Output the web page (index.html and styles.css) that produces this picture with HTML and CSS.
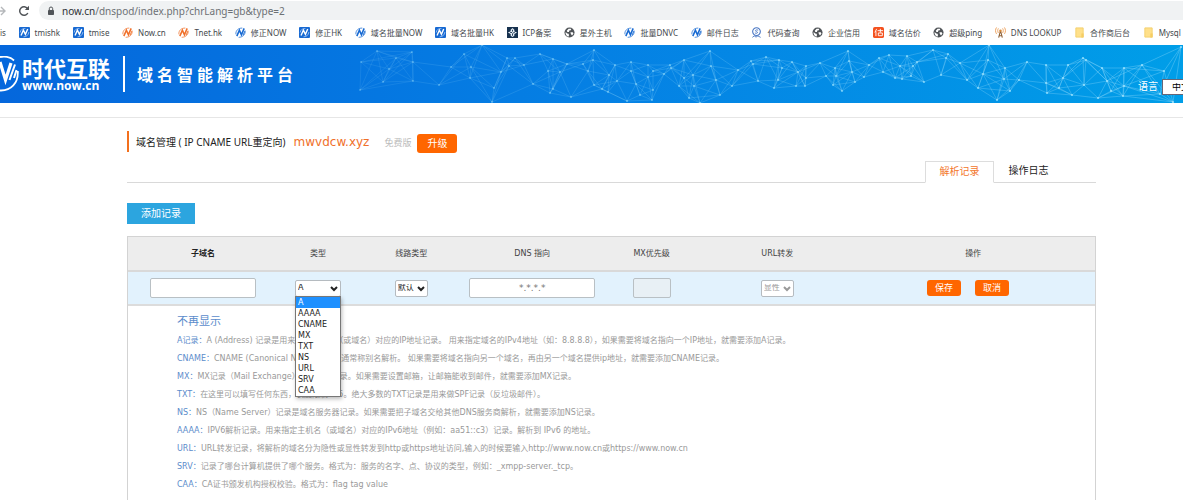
FILE: index.html
```html
<!DOCTYPE html>
<html lang="zh-CN">
<head>
<meta charset="utf-8">
<title>域名智能解析平台</title>
<link rel="stylesheet" href="styles.css">
</head>
<body>
<svg class="defs" aria-hidden="true">
  <symbol id="n-mark" viewBox="0 0 12 12"><path d="M1 8C.500 4 3.500 1 8 1.200M4 11.300c4 0 7-2.500 7.300-6.500" fill="none" stroke="currentColor" stroke-width=".8"/><path d="M2 10 4.800 3.500 7 8.500 10 1.500" fill="none" stroke="currentColor" stroke-width="1.700"/><path d="M8.800 8.800 11 4" fill="none" stroke="currentColor"/></symbol>
  <symbol id="n-box" viewBox="0 0 12 12"><rect width="12" height="12" rx="1" fill="#1769d2"/><path d="M2.200 9.200 4.800 3.500 7 8 9.500 2.200" fill="none" stroke="#fff" stroke-width="1.500"/><path d="M1.300 6C1.500 3 4 1.500 7 1.700M5 10.700c3 0 5.300-1.700 5.800-5.200" fill="none" stroke="#cfe3ff" stroke-width=".7"/></symbol>
  <symbol id="globe" viewBox="0 0 12 12"><circle cx="6" cy="6" r="5.500" fill="#4f5357"/><path d="M1.800 5.500 3.500 7l1.500.3.500 1.700-.8 1.500C2.500 9.800 1.300 7.800 1.800 5.500zM5 1.800l3 .1-.6 1.600-1.600.4-.4 1.500-1.700.1L3 4zM7 5.600l2.500.2.800 1.300-1.500 2.300-1.300-1.900z" fill="#fff"/></symbol>
  <symbol id="folder" viewBox="0 0 12 12"><path d="M2 1h8v10H2z" fill="#ffe08a" stroke="#f3d06c"/><path d="M8 7h2.500v4.500H8z" fill="#f6cd64"/></symbol>
</svg>
<header class="browser">
  <div class="toolbar">
    <svg class="nav-icon forward" viewBox="0 0 12 12"><path d="M0 6h10M6 2l4 4-4 4" fill="none" stroke="#b5b8bb" stroke-width="1.400"/></svg>
    <svg class="nav-icon" viewBox="0 0 12 12"><path d="M9.800 8A4.300 4.300 0 1 1 9.500 3.500" fill="none" stroke="#505458" stroke-width="1.500"/><path d="M11 .8V5H6.800z" fill="#505458"/></svg>
    <div class="address">
      <svg class="lock" viewBox="0 0 8 10"><rect x="1" y="4" width="6" height="5" rx=".8" fill="#505458"/><path d="M2.300 4V2.700a1.700 1.700 0 0 1 3.400 0V4" fill="none" stroke="#505458"/></svg>
      <span><b>now.cn</b>/dnspod/index.php?chrLang=gb&amp;type=2</span>
    </div>
  </div>
  <nav class="bookmarks" aria-label="书签">
    <a href="#">is</a>
    <a href="#"><svg><use href="#n-box"/></svg>tmishk</a>
    <a href="#"><svg><use href="#n-box"/></svg>tmise</a>
    <a href="#"><svg class="orange"><use href="#n-mark"/></svg>Now.cn</a>
    <a href="#"><svg class="orange"><use href="#n-mark"/></svg>Tnet.hk</a>
    <a href="#"><svg><use href="#n-mark"/></svg>修正NOW</a>
    <a href="#"><svg><use href="#n-box"/></svg>修正HK</a>
    <a href="#"><svg><use href="#n-mark"/></svg>域名批量NOW</a>
    <a href="#"><svg><use href="#n-box"/></svg>域名批量HK</a>
    <a href="#"><svg viewBox="0 0 12 12"><path d="M0 0h12v12H0z" fill="#17324f"/><path d="M6 1 8 3v2l3 1-3 1.500V9.500L6 11 4 9.500V7.500L1 6l3-1.500V3z" fill="#e6eef5"/><path d="M6 3v2M3.500 6h2M6.500 6.500l2-.5M6 7v2.500" stroke="#17324f"/></svg>ICP备案</a>
    <a href="#"><svg><use href="#globe"/></svg>星外主机</a>
    <a href="#"><svg><use href="#n-mark"/></svg>批量DNVC</a>
    <a href="#"><svg><use href="#n-mark"/></svg>邮件日志</a>
    <a href="#"><svg viewBox="0 0 12 12"><circle cx="6" cy="5" r="4.200" fill="none" stroke="#4b78c4" stroke-width="1.200"/><path d="M7.800 3.500C5 2.300 3.800 4.500 6 5s1 2.700-1.800 1.500M1.500 11.300l2-1.600 2 1.300 2-1.300 3 1.600" fill="none" stroke="#4b78c4"/></svg>代码查询</a>
    <a href="#"><svg><use href="#globe"/></svg>企业信用</a>
    <a href="#"><svg viewBox="0 0 12 12"><rect width="12" height="12" rx="2" fill="#f4511e"/><path d="M4 2 2 6M3.200 4.500V10M5 4h6M8 2v4M5.800 6.500h4.400v3H5.800z" fill="none" stroke="#fff"/></svg>域名估价</a>
    <a href="#"><svg><use href="#globe"/></svg>超级ping</a>
    <a href="#"><svg viewBox="0 0 12 12"><path d="M6 4 4 11.500M6 4l2 7.500M4.500 9.500h3" stroke="#8f6238" stroke-width="1.200" fill="none"/><circle cx="6" cy="4" r="1.300" fill="#d98836"/><path d="M3.700 1.500c-1 1.500-1 3.500 0 5M8.300 1.500c1 1.500 1 3.500 0 5M1.700.5c-1.500 2-1.500 5 0 7M10.300.5c1.500 2 1.500 5 0 7" stroke="#eda05a" fill="none"/></svg>DNS LOOKUP</a>
    <a href="#"><svg><use href="#folder"/></svg>合作商后台</a>
    <a href="#"><svg><use href="#folder"/></svg>Mysql</a>
  </nav>
</header>

<div class="banner">
  <svg class="network" id="network" viewBox="0 0 1183 58" preserveAspectRatio="xMaxYMid slice" aria-hidden="true"></svg>
  <svg class="logo" viewBox="0 0 20 36" aria-hidden="true"><path d="M0 1C6 0 11 1.500 14 4.500M0 34.500C11 35 18.500 27 17.800 15" fill="none" stroke="#fff" stroke-width="1.800"/><path d="M0 6 5.500 24 11 7" fill="none" stroke="#fff" stroke-width="3.200"/><path d="M9.500 24 15 8.500M14 22l2.500-8" fill="none" stroke="#fff" stroke-width="2"/></svg>
  <div class="brand"><strong>时代互联</strong><span>www.now.cn</span></div>
  <h1>域名智能解析平台</h1>
  <div class="language"><label for="lang">语言</label><select id="lang"><option>中文</option></select></div>
</div>

<main>
  <div class="heading">
    <h2>域名管理 ( IP CNAME URL重定向)</h2>
    <span class="domain">mwvdcw.xyz</span>
    <span class="plan">免费版</span>
    <button class="upgrade" type="button">升级</button>
  </div>
  <nav class="tabs"><a class="active" href="#">解析记录</a><a href="#">操作日志</a></nav>
  <button class="add" type="button">添加记录</button>

  <div class="panel">
    <table>
      <thead><tr><th class="c-host">子域名</th><th class="c-type">类型</th><th class="c-line">线路类型</th><th class="c-dns">DNS 指向</th><th class="c-mx">MX优先级</th><th class="c-url">URL转发</th><th>操作</th></tr></thead>
      <tbody><tr>
        <td><input class="host" type="text" aria-label="子域名"></td>
        <td><div class="pick type"><select aria-label="类型"><option>A</option></select><svg viewBox="0 0 8 6"><path d="M1 1l3 3 3-3"/></svg>
          <ul class="menu"><li class="selected">A</li><li>AAAA</li><li>CNAME</li><li>MX</li><li>TXT</li><li>NS</li><li>URL</li><li>SRV</li><li>CAA</li></ul></div></td>
        <td><div class="pick"><select aria-label="线路类型"><option>默认</option></select><svg viewBox="0 0 8 6"><path d="M1 1l3 3 3-3"/></svg></div></td>
        <td><input class="dns" type="text" placeholder="*.*.*.*" aria-label="DNS 指向"></td>
        <td><input class="mx" type="text" disabled aria-label="MX优先级"></td>
        <td><div class="pick off"><select disabled aria-label="URL转发"><option>显性</option></select><svg viewBox="0 0 8 6"><path d="M1 1l3 3 3-3"/></svg></div></td>
        <td><div class="actions"><button type="button">保存</button><button type="button">取消</button></div></td>
      </tr></tbody>
    </table>
    <div class="help">
      <a href="#">不再显示</a>
      <p><b>A记录：</b>A (Address) 记录是用来指定主机名（或域名）对应的IP地址记录。 用来指定域名的IPv4地址（如：8.8.8.8），如果需要将域名指向一个IP地址，就需要添加A记录。</p>
      <p><b>CNAME：</b>CNAME (Canonical Name)记录，通常称别名解析。 如果需要将域名指向另一个域名，再由另一个域名提供ip地址，就需要添加CNAME记录。</p>
      <p><b>MX：</b>MX记录（Mail Exchange）邮件交换记录。如果需要设置邮箱，让邮箱能收到邮件，就需要添加MX记录。</p>
      <p><b>TXT：</b>在这里可以填写任何东西，长度限制255。绝大多数的TXT记录是用来做SPF记录（反垃圾邮件）。</p>
      <p><b>NS：</b>NS（Name Server）记录是域名服务器记录。如果需要把子域名交给其他DNS服务商解析，就需要添加NS记录。</p>
      <p><b>AAAA：</b>IPV6解析记录。用来指定主机名（或域名）对应的IPv6地址（例如：aa51::c3）记录。解析到 IPv6 的地址。</p>
      <p><b>URL：</b>URL转发记录，将解析的域名分为隐性或显性转发到http或https地址访问,输入的时候要输入http://www.now.cn或https://www.now.cn</p>
      <p><b>SRV：</b>记录了哪台计算机提供了哪个服务。格式为：服务的名字、点、协议的类型，例如：_xmpp-server._tcp。</p>
      <p><b>CAA：</b>CA证书颁发机构授权校验。格式为：flag tag value</p>
    </div>
  </div>
</main>
<script src="network.js"></script>
</body>
</html>
```
FILE: styles.css
```css
* { box-sizing: border-box; }
body { margin: 0; overflow: hidden; background: #fff; color: #333; font: 8px/1 "DejaVu Sans", "Noto Sans CJK SC", sans-serif; }
a { color: inherit; text-decoration: none; }
input, select, button { font: inherit; margin: 0; }
.defs { position: absolute; width: 0; height: 0; }

.browser { font-family: "Noto Sans", "Noto Sans CJK SC", sans-serif; color: #45494d; }
.toolbar { display: flex; align-items: center; height: 20px; border-top: 1px solid #fff; }
.nav-icon { width: 12px; height: 12px; flex: none; margin-right: 8px; }
.forward { margin-left: -5px; margin-right: 11px; }
.address { flex: 1; display: flex; align-items: center; gap: 7px; height: 19px; margin-left: 1px; padding-left: 8px; background: #f0f2f3; border-radius: 10px 0 0 10px; color: #6d7175; font-size: 10px; white-space: nowrap; }
.address b { color: #2e3134; font-weight: normal; }
.lock { width: 8px; height: 10px; }
.bookmarks { display: flex; justify-content: space-between; height: 25px; align-items: center; padding-right: 2px; overflow: hidden; white-space: nowrap; }
.bookmarks a { display: flex; align-items: center; gap: 5px; flex: none; }
.bookmarks svg { width: 11px; height: 11px; color: #1769d2; }
.bookmarks .orange { color: #f0702a; }

.banner { position: relative; display: flex; align-items: center; height: 58px; overflow: hidden; color: #fff; background: linear-gradient(90deg, #0567dc, #0580e4 50%, #009ee8); }
.network { position: absolute; inset: 0; width: 100%; height: 100%; }
.logo { width: 20px; height: 36px; flex: none; }
.brand { display: flex; flex-direction: column; gap: 2px; padding: 0 13px 0 2px; border-right: 2px solid #fff; white-space: nowrap; }
.brand strong { font: bold 22px/22px "Noto Sans CJK SC", sans-serif; }
.brand span { font: bold 12px/12px "Open Sans", sans-serif; }
h1 { margin: 0 0 0 12px; font: bold 16px/20px "Noto Sans CJK SC", sans-serif; letter-spacing: 4px; white-space: nowrap; }
.language { position: relative; display: flex; align-items: center; gap: 4px; margin: 26px -16px 0 auto; font-size: 10px; }
.language select { width: 37px; height: 16px; padding: 0 0 0 9px; appearance: none; border: 1px solid #667; border-radius: 0; background: #fff; color: #000; font-size: 9px; }

main { margin-top: 14px; padding: 13px 87px 0 127px; border-top: 1px solid #e6e6e6; }
.heading { display: flex; align-items: center; height: 21px; margin-bottom: 9px; padding-left: 7px; border-left: 2px solid #f3701d; white-space: nowrap; }
h2 { margin: 0 8px 0 0; font: 10px/20px "Noto Sans", "Noto Sans CJK SC", sans-serif; color: #222; }
.domain { font-size: 12px; color: #f0702a; }
.plan { margin: 4px 6px 0 15px; font-size: 9px; color: #bbb; }
button { padding: 0; border: 0; color: #fff; background: #ff6600; }
.upgrade { width: 40px; height: 19px; margin-top: 4px; border-radius: 3px; font-size: 10px; }
.tabs { display: flex; justify-content: flex-end; padding-right: 33px; border-bottom: 1px solid #d9d9d9; font-size: 10px; line-height: 20px; color: #222; }
.tabs a { width: 69px; text-align: center; }
.tabs .active { margin-bottom: -1px; border: 1px solid #ddd; border-bottom-color: #fff; background: #fff; color: #f3762a; }
.add { display: block; width: 68px; height: 21px; margin: 20px 0 12px; background: #2ca5df; font-size: 10px; }

.panel { border: 1px solid #d3d3d3; border-bottom: 0; }
table { width: 100%; table-layout: fixed; border-collapse: collapse; }
th { height: 34px; padding: 0; border-bottom: 2px solid #d9d9d9; background: #ededed; color: #444; font-weight: normal; }
.c-host { width: 15.5%; color: #222; font-weight: bold; }
.c-type { width: 8.3%; }
.c-line { width: 11%; }
.c-dns { width: 14%; }
.c-mx { width: 10.7%; }
.c-url { width: 15.3%; }
td { height: 34px; padding: 0; border-bottom: 2px solid #dcdcdc; background: #e2f2fd; text-align: center; }
input { height: 20px; border: 1px solid #b9c0c4; border-radius: 2px; background: #fff; text-align: center; vertical-align: middle; }
.host { width: 106px; }
.dns { width: 126px; font-size: 9px; }
.mx { width: 38px; background: #e8f0f5; }
.pick { position: relative; display: inline-block; width: 33px; vertical-align: middle; text-align: left; color: #222; }
.pick.type { width: 46px; }
.pick select { display: block; width: 100%; height: 17px; padding: 0 2px; appearance: none; border: 1px solid #b5bbc0; border-radius: 2px; background: #fff; color: inherit; opacity: 1; }
.pick svg { position: absolute; right: 3px; top: 6px; width: 8px; height: 6px; fill: none; stroke: currentColor; stroke-width: 2; pointer-events: none; }
.pick.off { color: #999; }
.menu { position: absolute; z-index: 2; top: 16px; left: 0; width: 46px; margin: 0; padding: 0; border: 1px solid #777; background: #fff; list-style: none; line-height: 11px; box-shadow: 1px 2px 4px #0004; }
.menu li { padding-left: 2px; }
.menu .selected { background: #1e90ff; color: #fff; }
.actions { display: flex; justify-content: center; gap: 14px; padding-right: 10px; }
.actions button { width: 34px; height: 16px; border-radius: 3px; font-size: 9px; }

.help { padding: 6px 0 16px 49px; color: #999; white-space: nowrap; }
.help a { display: block; color: #5b8ccb; font-size: 11px; line-height: 20px; }
.help p { margin: 0; line-height: 18px; }
.help b { color: #5b8ccb; font-weight: normal; }
```
FILE: network.js
```js
const points = [
  [361,17],[377,6],[396,13],[389,24],[383,37],[360,45],[412,7],[413,17],[413,36],[439,40],[451,22],[464,9],[482,0],[471,22],[470,33],[494,43],[492,57],[501,27],[507,13],[509,21],[524,20],[515,13],[533,39],[540,9],[553,14],[548,26],[553,44],[550,48],[571,52],[560,27],[567,19],[583,19],[588,26],[594,5],[593,15],[594,40],[602,44],[608,47],[615,20],[609,30],[617,36],[631,17],[631,26],[636,39],[627,56],[640,50],[652,55],[653,45],[648,20],[653,26],[648,32],[670,20],[664,29],[671,23],[684,15],[684,33],[679,41],[689,53],[694,41],[693,30],[710,6],[711,21],[716,35],[720,50],[700,58],[732,41],[738,25],[751,16],[753,19],[758,36],[766,12],[779,15],[782,23],[778,35],[774,43],
  [792,17],[798,27],[796,41],[806,21],[806,33],[805,41],[820,18],[826,31],[835,23],[836,31],[833,40],[842,46],[848,6],[849,16],[852,27],[855,37],[864,32],[869,20],[879,13],[883,27],[889,10],[895,33],[902,34],[900,21],[907,11],[913,21],[911,31],[917,17],[924,37],[933,5],[946,13],[948,9],[941,30],[960,18],[967,35],[989,0],[988,15],[983,29],[978,43],[997,55],[1010,46],[1004,34],[1005,23],[1019,35],[1027,17],[1046,20],[1046,38],[1047,48],[1059,43],[1063,33],[1068,20],[1072,50],[1083,13],[1086,15],[1084,40],[1102,23],[1107,36],[1111,46],[1098,53],[1123,51],[1124,41],[1124,23],[1142,20],[1164,26],[1160,49],[1181,2],[1173,57]
];
const svg = document.getElementById("network");
const drawn = new Set();

function add(tag, attributes) {
  const node = document.createElementNS("http://www.w3.org/2000/svg", tag);
  for (const name in attributes) node.setAttribute(name, attributes[name]);
  svg.append(node);
}

// Join every point to its nearest neighbours; the mesh fades in from left to right.
points.forEach(([x, y], i) => {
  const strength = 0.15 + 0.3 * (x - 360) / 820;
  points
    .map(([px, py], j) => ({ j, d: Math.hypot(px - x, py - y) }))
    .filter(({ j, d }) => j !== i && d < 60)
    .sort((a, b) => a.d - b.d)
    .slice(0, 6)
    .forEach(({ j }) => {
      const key = Math.min(i, j) + "-" + Math.max(i, j);
      if (drawn.has(key)) return;
      drawn.add(key);
      add("line", { x1: x, y1: y, x2: points[j][0], y2: points[j][1], stroke: "#a5e4ff", "stroke-width": 0.7, opacity: strength });
    });
  add("circle", { cx: x, cy: y, r: 1.1, fill: "#9be4ff", opacity: Math.min(1, strength * 2) });
});
```
